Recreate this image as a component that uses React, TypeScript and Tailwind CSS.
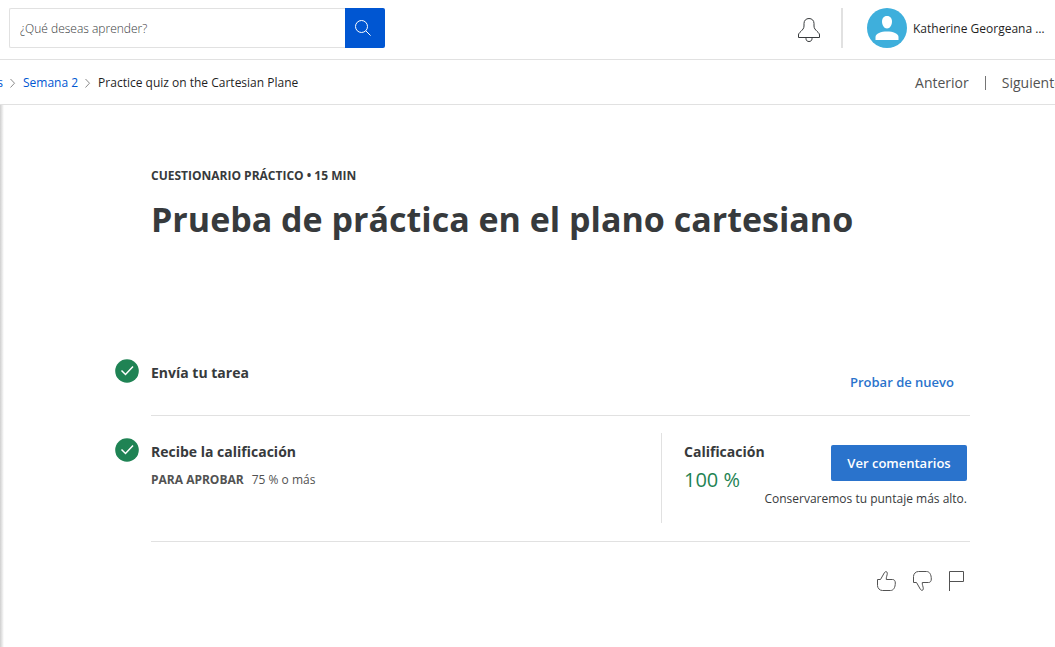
import type { ReactNode } from "react";

function Chevron() {
  return (
    <svg aria-hidden="true" className="mx-1 mt-px h-3 w-3 shrink-0" viewBox="0 0 12 12" fill="none" stroke="#8a8a8a">
      <path d="M3.500 2 7.500 6.200 3.500 10.500" />
    </svg>
  );
}

function DoneIcon() {
  return (
    <svg role="img" aria-label="Completado" className="h-6 w-6 shrink-0" viewBox="0 0 24 24" fill="none">
      <circle cx="12" cy="12" r="11.8" fill="#1f8354" />
      <path d="M6.500 11.500 10.500 15.500 18 7.500" stroke="#fff" strokeWidth="1.5" />
    </svg>
  );
}

function Thumb({ down = false }: { down?: boolean }) {
  return (
    <svg
      aria-hidden="true"
      className={down ? "h-5 w-5 -scale-y-100" : "h-5 w-5"}
      viewBox="0 0 20 20"
      fill="none"
      stroke="#525252"
    >
      <path d="M1.500 8.500H4.500L8.500 1.500C9.300.3 11.300.3 11.300 2.200 11.300 4.500 10 6 10.300 8.500H16.500C18.500 8.500 19.300 10 19.300 12 19.300 16.500 17.500 19.500 14.500 19.500H6.500C3.500 19.500 1.500 17 1.500 14.500Z" />
    </svg>
  );
}

function IconButton({ label, children }: { label: string; children: ReactNode }) {
  return (
    <button type="button" aria-label={label} className="flex h-6 w-6 items-center justify-center">
      {children}
    </button>
  );
}

export default function App() {
  return (
    <div className="flex min-h-screen flex-col overflow-x-hidden bg-white font-['Open_Sans',sans-serif] text-[#373a3c]">
      <header className="flex h-[60px] items-start justify-between border-b border-[#e1e1e1] pt-2 pl-[9px]">
        <form className="flex h-10 w-[376px]" onSubmit={(e) => e.preventDefault()}>
          <input
            type="text"
            aria-label="¿Qué deseas aprender?"
            placeholder="¿Qué deseas aprender?"
            className="min-w-0 flex-1 rounded-l-xs border border-r-0 border-[#e1e1e1] px-[10px] pt-[2px] text-xs font-light outline-none placeholder:text-[#373a3c]"
          />
          <button type="submit" aria-label="Buscar" className="flex w-10 items-center justify-center rounded-r-xs bg-[#0056d2]">
            <svg aria-hidden="true" className="mr-1 h-4 w-4" viewBox="0 0 16 16" fill="none" stroke="#fff">
              <circle cx="6.500" cy="6.500" r="6" />
              <path d="m10.800 10.800 4.800 4.800" />
            </svg>
          </button>
        </form>
        <div className="flex h-10 items-center">
          <button type="button" aria-label="Notificaciones" className="mr-5 flex h-6 w-6 items-center">
            <svg aria-hidden="true" className="mt-1 h-6 w-6 overflow-visible" viewBox="0 0 24 24" fill="none" stroke="#373a3c">
              <path d="M12 .5C9 .5 7 2.500 7 5.500V8C7 10.500 5.500 11.700 4 13.300 2.500 14.800 1.500 15.500 1.500 17V19.500H22.500V17C22.500 15.500 21.500 14.800 20 13.300 18.500 11.700 17 10.500 17 8V5.500C17 2.500 15 .5 12 .5Z" />
              <path d="M9 19.500V20.500C9 22.500 10.200 23.500 12 23.500S15 22.500 15 20.500V19.500" />
            </svg>
          </button>
          <div className="h-10 w-[2px] bg-[#e1e1e1]" />
          <button type="button" className="ml-6 flex w-[188px] items-center gap-[6px]">
            <svg aria-hidden="true" className="h-10 w-10 shrink-0" viewBox="0 0 40 40">
              <circle cx="20" cy="20" r="20" fill="#3eafdc" />
              <path d="M20 8C23.500 8 25 10.500 25 13.500 25 17 23 20.500 20 20.500S15 17 15 13.500C15 10.500 16.500 8 20 8Z" fill="#fff" />
              <path d="M8.500 32V29C8.500 25.500 14 23.500 20 23.500S31.500 25.500 31.500 29V32Z" fill="#fff" />
            </svg>
            <span className="pt-[2px] text-xs whitespace-nowrap text-[#1f1f1f]">Katherine Georgeana …</span>
          </button>
        </div>
      </header>

      <div className="flex h-[45px] items-center justify-between border-b border-[#e1e1e1] pt-px whitespace-nowrap">
        <nav aria-label="Ruta" className="flex items-center text-xs">
          <a href="#semanas" className="flex w-[3px] justify-end text-[#0056d2]">s</a>
          <Chevron />
          <a href="#semana-2" className="text-[#0056d2]">Semana 2</a>
          <Chevron />
          <span className="text-[#1f1f1f]">Practice quiz on the Cartesian Plane</span>
        </nav>
        <nav aria-label="Elementos" className="-mr-[7px] flex items-center text-sm text-[#525252]">
          <a href="#anterior">Anterior</a>
          <span aria-hidden="true" className="mx-4 h-[14px] w-px bg-[#757575]" />
          <a href="#siguiente">Siguiente</a>
        </nav>
      </div>

      <div className="flex flex-1">
        <div className="w-1 shrink-0 bg-linear-to-r from-[#cfcfcf] to-white" />
        <main className="min-w-0 flex-1 pt-[63px] pr-[85px] pl-[111px]">
          <div className="pl-9">
            <p className="text-xs leading-4 font-bold">CUESTIONARIO PRÁCTICO • 15 MIN</p>
            <h1 className="mt-[11px] text-[34px] leading-[48px] font-bold">Prueba de práctica en el plano cartesiano</h1>
          </div>

          <section className="mt-[116px] flex gap-3">
            <DoneIcon />
            <div className="flex h-[57px] flex-1 items-start justify-between border-b border-[#e1e1e1] pt-1">
              <h2 className="text-sm leading-5 font-bold">Envía tu tarea</h2>
              <button type="button" className="mt-[9px] mr-4 text-[13px] leading-5 font-semibold text-[#2a73cc]">
                Probar de nuevo
              </button>
            </div>
          </section>

          <section className="mt-[17px] flex gap-3">
            <div className="pt-[5px]">
              <DoneIcon />
            </div>
            <div className="flex h-[109px] flex-1 border-b border-[#e1e1e1]">
              <div className="flex-1 pt-[9px]">
                <h2 className="text-sm leading-5 font-bold">Recibe la calificación</h2>
                <p className="mt-2 text-xs leading-5 text-[#525252]">
                  <span className="mr-2 font-bold">PARA APROBAR</span>75 % o más
                </p>
              </div>
              <div className="flex h-[90px] w-[309px] justify-between border-l border-[#e1e1e1] pr-[3px] pl-[22px]">
                <div className="pt-[9px]">
                  <h2 className="text-sm leading-5 font-bold">Calificación</h2>
                  <p className="mt-1 text-xl leading-7 text-[#1f8354]">100 %</p>
                </div>
                <div className="-ml-4 flex flex-col items-end pt-3">
                  <button type="button" className="h-9 w-[136px] rounded-xs bg-[#2a73cc] pt-px text-[13px] font-semibold text-white">
                    Ver comentarios
                  </button>
                  <p className="mt-2 text-xs leading-5 whitespace-nowrap">Conservaremos tu puntaje más alto.</p>
                </div>
              </div>
            </div>
          </section>

          <div className="mt-[27px] flex justify-end gap-3">
            <IconButton label="Me gusta">
              <Thumb />
            </IconButton>
            <IconButton label="No me gusta">
              <Thumb down />
            </IconButton>
            <IconButton label="Informar un problema">
              <svg aria-hidden="true" className="h-5 w-5" viewBox="0 0 20 20" fill="none" stroke="#525252">
                <path d="M1.500 20V.5h14v10h-14" />
              </svg>
            </IconButton>
          </div>
        </main>
      </div>
    </div>
  );
}
